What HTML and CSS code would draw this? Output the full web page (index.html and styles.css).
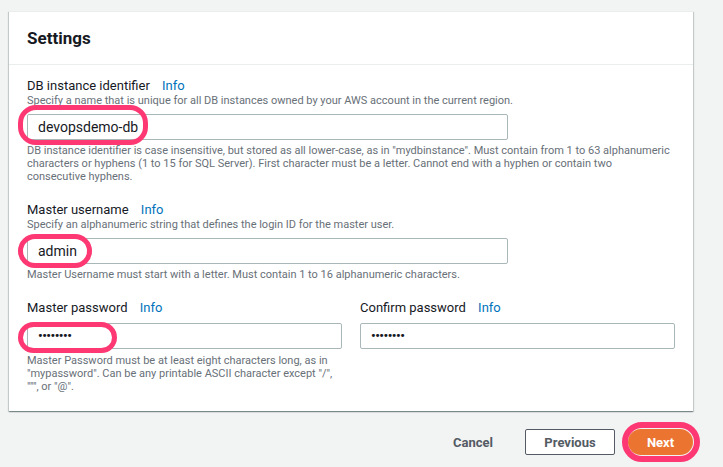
FILE: index.html
```html
<!DOCTYPE html>
<html lang="en">
<head>
<meta charset="utf-8">
<title>Settings</title>
<link rel="stylesheet" href="styles.css">
</head>
<body>
<div class="page">
  <section class="card">
    <header class="card-header"><h2>Settings</h2></header>
    <div class="card-body">
      <div class="field">
        <div class="label">DB instance identifier <a class="info">Info</a></div>
        <div class="desc">Specify a name that is unique for all DB instances owned by your AWS account in the current region.</div>
        <div class="input-wrap w-wide">
          <div class="input">devopsdemo-db</div>
          <span class="mark mark-db"></span>
        </div>
        <div class="hint hint-db">DB instance identifier is case insensitive, but stored as all lower-case, as in "mydbinstance". Must contain from 1 to 63 alphanumeric characters or hyphens (1 to 15 for SQL Server). First character must be a letter. Cannot end with a hyphen or contain two consecutive hyphens.</div>
      </div>
      <div class="field">
        <div class="label">Master username <a class="info">Info</a></div>
        <div class="desc">Specify an alphanumeric string that defines the login ID for the master user.</div>
        <div class="input-wrap w-wide">
          <div class="input">admin</div>
          <span class="mark mark-user"></span>
        </div>
        <div class="hint">Master Username must start with a letter. Must contain 1 to 16 alphanumeric characters.</div>
      </div>
      <div class="row">
        <div class="col">
          <div class="label">Master password <a class="info">Info</a></div>
          <div class="input-wrap">
            <div class="input pw">&bull;&bull;&bull;&bull;&bull;&bull;&bull;&bull;</div>
            <span class="mark mark-pw"></span>
          </div>
          <div class="hint">Master Password must be at least eight characters long, as in "mypassword". Can be any printable ASCII character except "/", """, or "@".</div>
        </div>
        <div class="col">
          <div class="label">Confirm password <a class="info">Info</a></div>
          <div class="input-wrap">
            <div class="input pw">&bull;&bull;&bull;&bull;&bull;&bull;&bull;&bull;</div>
          </div>
        </div>
      </div>
    </div>
  </section>
  <div class="actions">
    <button class="btn btn-link">Cancel</button>
    <button class="btn btn-normal">Previous</button>
    <div class="next-wrap">
      <button class="btn btn-primary">Next</button>
      <span class="mark mark-next"></span>
    </div>
  </div>
</div>
</body>
</html>
```

FILE: styles.css
```css
* { box-sizing: border-box; }
html, body { margin: 0; padding: 0; }
body {
  background: #f2f3f3;
  font-family: "Roboto", "Liberation Sans", Arial, sans-serif;
  color: #16191f;
  width: 723px;
  height: 467px;
  overflow: hidden;
}
.page {
  padding: 11px 30px 0 9px;
}
.card {
  background: #fff;
  box-shadow: 0 1px 1px 0 rgba(0,28,36,.3), 1px 1px 1px 0 rgba(0,28,36,.15), -1px 1px 1px 0 rgba(0,28,36,.15);
  border-top: 1px solid #eaeded;
}
.card-header {
  height: 53px;
  border-bottom: 1px solid #eaeded;
  display: flex;
  align-items: center;
  padding: 0 18px;
}
.card-header h2 {
  margin: 0;
  font-size: 17px;
  font-weight: 700;
  line-height: 20px;
  color: #16191f;
}
.card-body {
  padding: 13px 18px 18px;
}
.field + .field, .field + .row { margin-top: 19px; }
.label {
  font-size: 13px;
  line-height: 16px;
  color: #16191f;
}
.info {
  color: #0073bb;
  margin-left: 9px;
  text-decoration: none;
}
.desc {
  font-size: 11px;
  line-height: 14px;
  color: #687078;
}
.input-wrap {
  position: relative;
  margin-top: 6px;
}
.w-wide { width: 481px; }
.row .input-wrap { margin-top: 7px; }
.input {
  height: 26px;
  border: 1px solid #aab7b8;
  border-radius: 2px;
  padding: 0 10px;
  font-size: 14px;
  line-height: 24px;
  color: #16191f;
}
.pw { font-size: 13px; letter-spacing: -0.5px; font-weight: 700; }
.hint {
  margin-top: 4px;
  font-size: 11px;
  line-height: 13px;
  color: #687078;
}
.hint-db { max-width: 645px; }
.row .hint { margin-top: 5px; }
.row {
  display: grid;
  grid-template-columns: 315px 315px;
  column-gap: 18px;
  align-items: start;
}
.mark {
  position: absolute;
  border: 5px solid #fd3873;
  border-radius: 18px;
  pointer-events: none;
}
.mark-db { left: -9px; top: -9px; width: 130px; height: 40px; }
.mark-user { left: -9px; top: -4px; width: 74px; height: 34px; }
.mark-pw { left: -9px; top: -1px; width: 99px; height: 31px; }
.actions {
  display: flex;
  justify-content: flex-end;
  align-items: center;
  margin-top: 18px;
}
.btn {
  font-family: inherit;
  font-size: 13px;
  font-weight: 700;
  height: 26px;
  border-radius: 2px;
  padding: 0 18px;
  cursor: pointer;
}
.btn-link {
  background: none;
  border: none;
  color: #545b64;
  margin-right: 14px;
}
.btn-normal {
  background: #fff;
  border: 1px solid #545b64;
  color: #545b64;
  width: 90px;
}
.next-wrap {
  position: relative;
  margin-left: 13px;
}
.btn-primary {
  display: block;
  background: #ec7431;
  border: none;
  color: #fff;
  width: 65px;
  border-radius: 13px;
}
.mark-next { left: -6px; top: -7px; width: 78px; height: 40px; border-width: 6px; border-radius: 20px; }
```
